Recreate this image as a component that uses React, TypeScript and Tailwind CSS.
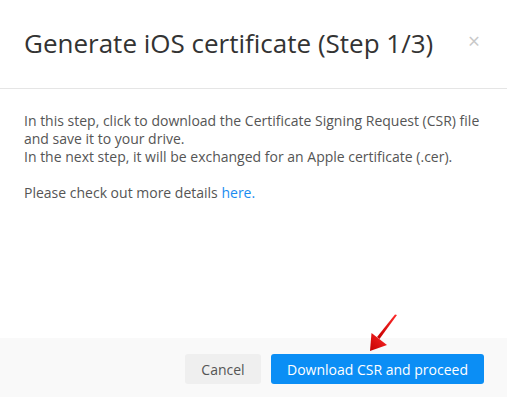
import React from "react";

function RedArrow() {
  return (
    <svg
      className="absolute left-[360px] top-[310px]"
      width="50"
      height="50"
      viewBox="0 0 50 50"
    >
      <defs>
        <linearGradient id="arrowGrad" x1="1" y1="0" x2="0" y2="1">
          <stop offset="0" stopColor="#ff2a2a" />
          <stop offset="1" stopColor="#c40000" />
        </linearGradient>
      </defs>
      <path d="M37 5 L35 4.5 L17 27 L19.5 29 Z" fill="url(#arrowGrad)" />
      <path d="M10 41 L11.5 23 L27 35 Z" fill="url(#arrowGrad)" />
    </svg>
  );
}

export default function App() {
  return (
    <div
      className="relative w-[507px] h-[397px] bg-white flex flex-col overflow-hidden"
      style={{ fontFamily: '"Open Sans", sans-serif' }}
    >
      {/* Header */}
      <div className="h-[89px] border-b border-[#e5e5e5] flex items-center justify-between pl-[24px] pr-[27px]">
        <h1 className="text-[26px] leading-none text-[#333] pb-[3px]">
          Generate iOS certificate (Step 1/3)
        </h1>
        <span className="text-[#c8c8c8] text-[21px] leading-none pb-[5px]">×</span>
      </div>

      {/* Body */}
      <div className="flex-1 px-[24px] pt-[23px] text-[14px] leading-[18px] text-[#555]">
        <p>
          In this step, click to download the Certificate Signing Request (CSR) file
          <br />
          and save it to your drive.
          <br />
          In the next step, it will be exchanged for an Apple certificate (.cer).
        </p>
        <p className="mt-[18px]">
          Please check out more details{" "}
          <a href="#" className="text-[#1a8cf0]">
            here.
          </a>
        </p>
      </div>

      {/* Footer */}
      <div className="h-[59px] bg-[#f9f9f9] flex justify-end items-start pt-[16px] pr-[23px] gap-[10px]">
        <button className="h-[30px] w-[76px] rounded-[3px] bg-[#efefef] text-[#555] text-[14px]">
          Cancel
        </button>
        <button className="h-[30px] w-[213px] rounded-[3px] bg-[#0b8ef5] text-white text-[14px]">
          Download CSR and proceed
        </button>
      </div>

      <RedArrow />
    </div>
  );
}
